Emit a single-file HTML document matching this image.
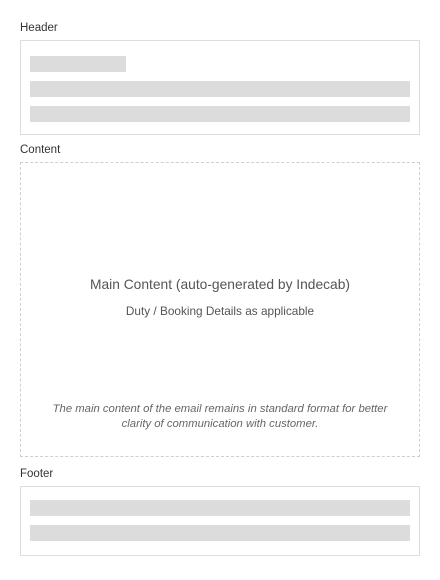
<!DOCTYPE html>
<html><head><style>
body{margin:0;width:440px;height:580px;background:#fff;font-family:"Liberation Sans",sans-serif;position:relative}
.a{position:absolute}
.lbl{font-size:11.5px;color:#333;left:20px}
.bar{position:absolute;background:#dcdcdc;left:30px;width:380px;height:16px}
.box{position:absolute;left:20px;width:398px;border:1px solid #ddd}
</style></head><body>
<div class="a lbl" style="top:22px">Header</div>
<div class="box" style="top:40px;height:93px"></div>
<div class="bar" style="top:56px;width:96px"></div>
<div class="bar" style="top:81px"></div>
<div class="bar" style="top:106px"></div>
<div class="a lbl" style="top:144px">Content</div>
<div class="box" style="top:162px;height:293px;border:1px dashed #cfcfcf"></div>
<div class="a" style="left:20px;width:400px;top:277px;text-align:center;font-size:13.8px;color:#555">Main Content (auto-generated by Indecab)</div>
<div class="a" style="left:20px;width:400px;top:304px;text-align:center;font-size:11.8px;color:#555">Duty / Booking Details as applicable</div>
<div class="a" style="left:20px;width:400px;top:402px;text-align:center;font-size:11.3px;line-height:15px;color:#666;font-style:italic">The main content of the email remains in standard format for better<br>clarity of communication with customer.</div>
<div class="a lbl" style="top:468px">Footer</div>
<div class="box" style="top:486px;height:68px"></div>
<div class="bar" style="top:500px"></div>
<div class="bar" style="top:525px"></div>
</body></html>
